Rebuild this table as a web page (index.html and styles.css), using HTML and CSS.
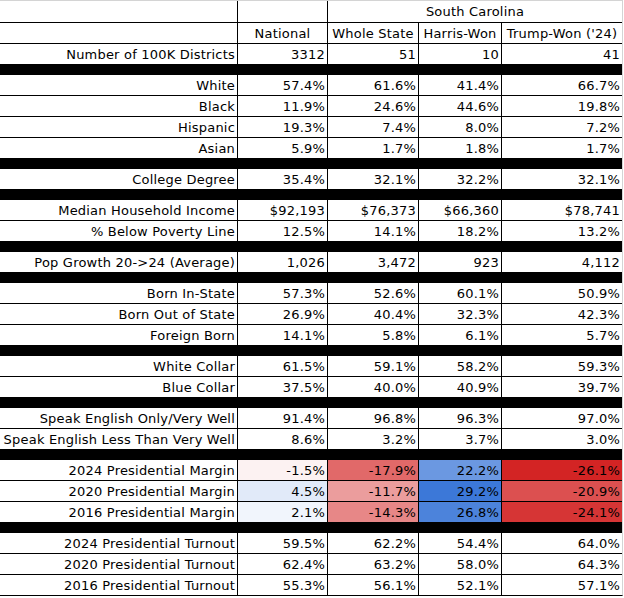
FILE: index.html
```html
<!DOCTYPE html>
<html lang="en">
<head>
<meta charset="utf-8">
<title>South Carolina 100K Districts</title>
<link rel="stylesheet" href="styles.css">
</head>
<body>
<div class="sheet">
  <div class="c blank top"></div><div class="c blank top"></div><div class="c head top span3">South Carolina</div>

  <div class="c blank"></div><div class="c head">National</div><div class="c head">Whole State</div><div class="c head">Harris-Won</div><div class="c head">Trump-Won ('24)</div>

  <div class="c">Number of 100K Districts</div><div class="c">3312</div><div class="c">51</div><div class="c">10</div><div class="c">41</div>
  <div class="bar"></div>

  <div class="c">White</div><div class="c">57.4%</div><div class="c">61.6%</div><div class="c">41.4%</div><div class="c">66.7%</div>
  <div class="c">Black</div><div class="c">11.9%</div><div class="c">24.6%</div><div class="c">44.6%</div><div class="c">19.8%</div>
  <div class="c">Hispanic</div><div class="c">19.3%</div><div class="c">7.4%</div><div class="c">8.0%</div><div class="c">7.2%</div>
  <div class="c">Asian</div><div class="c">5.9%</div><div class="c">1.7%</div><div class="c">1.8%</div><div class="c">1.7%</div>
  <div class="bar"></div>

  <div class="c">College Degree</div><div class="c">35.4%</div><div class="c">32.1%</div><div class="c">32.2%</div><div class="c">32.1%</div>
  <div class="bar"></div>

  <div class="c">Median Household Income</div><div class="c">$92,193</div><div class="c">$76,373</div><div class="c">$66,360</div><div class="c">$78,741</div>
  <div class="c">% Below Poverty Line</div><div class="c">12.5%</div><div class="c">14.1%</div><div class="c">18.2%</div><div class="c">13.2%</div>
  <div class="bar"></div>

  <div class="c">Pop Growth 20-&gt;24 (Average)</div><div class="c">1,026</div><div class="c">3,472</div><div class="c">923</div><div class="c">4,112</div>
  <div class="bar"></div>

  <div class="c">Born In-State</div><div class="c">57.3%</div><div class="c">52.6%</div><div class="c">60.1%</div><div class="c">50.9%</div>
  <div class="c">Born Out of State</div><div class="c">26.9%</div><div class="c">40.4%</div><div class="c">32.3%</div><div class="c">42.3%</div>
  <div class="c">Foreign Born</div><div class="c">14.1%</div><div class="c">5.8%</div><div class="c">6.1%</div><div class="c">5.7%</div>
  <div class="bar"></div>

  <div class="c">White Collar</div><div class="c">61.5%</div><div class="c">59.1%</div><div class="c">58.2%</div><div class="c">59.3%</div>
  <div class="c">Blue Collar</div><div class="c">37.5%</div><div class="c">40.0%</div><div class="c">40.9%</div><div class="c">39.7%</div>
  <div class="bar"></div>

  <div class="c">Speak English Only/Very Well</div><div class="c">91.4%</div><div class="c">96.8%</div><div class="c">96.3%</div><div class="c">97.0%</div>
  <div class="c">Speak English Less Than Very Well</div><div class="c">8.6%</div><div class="c">3.2%</div><div class="c">3.7%</div><div class="c">3.0%</div>
  <div class="bar"></div>

  <div class="c">2024 Presidential Margin</div><div class="c" style="background:#fcf2f2">-1.5%</div><div class="c" style="background:#e16969">-17.9%</div><div class="c" style="background:#6b98e1">22.2%</div><div class="c" style="background:#d32424">-26.1%</div>
  <div class="c">2020 Presidential Margin</div><div class="c" style="background:#e1eaf9">4.5%</div><div class="c" style="background:#eb9d9d">-11.7%</div><div class="c" style="background:#3c78d8">29.2%</div><div class="c" style="background:#dc5050">-20.9%</div>
  <div class="c">2016 Presidential Margin</div><div class="c" style="background:#f1f5fc">2.1%</div><div class="c" style="background:#e78787">-14.3%</div><div class="c" style="background:#4c83db">26.8%</div><div class="c" style="background:#d63535">-24.1%</div>
  <div class="bar"></div>

  <div class="c">2024 Presidential Turnout</div><div class="c">59.5%</div><div class="c">62.2%</div><div class="c">54.4%</div><div class="c">64.0%</div>
  <div class="c">2020 Presidential Turnout</div><div class="c">62.4%</div><div class="c">63.2%</div><div class="c">58.0%</div><div class="c">64.3%</div>
  <div class="c">2016 Presidential Turnout</div><div class="c">55.3%</div><div class="c">56.1%</div><div class="c">52.1%</div><div class="c">57.1%</div>
</div>
</body>
</html>
```

FILE: styles.css
```css
html, body {
  margin: 0;
  padding: 0;
  background: #ffffff;
}

.sheet {
  display: grid;
  grid-template-columns: 237px 89px 90px 82px 120px;
  gap: 1px;
  width: 622px;
  background: #000000;
  border-top: 1px solid #d4d4d4;
  border-right: 1px solid #d4d4d4;
  border-bottom: 1px solid #000000;
  font-family: "DejaVu Sans", Verdana, sans-serif;
  font-size: 13px;
  letter-spacing: 0.2px;
  color: #000000;
}

.c {
  background: #ffffff;
  height: 20px;
  line-height: 22px;
  padding: 0 2px 0 3px;
  text-align: right;
  white-space: nowrap;
  overflow: hidden;
}

.c.top {
  height: 21px;
  line-height: 22px;
}

.c.head {
  text-align: center;
  padding: 0 2px;
}

.span3 {
  grid-column: span 3;
}

.bar {
  grid-column: 1 / -1;
  height: 9px;
  background: #000000;
}
```
